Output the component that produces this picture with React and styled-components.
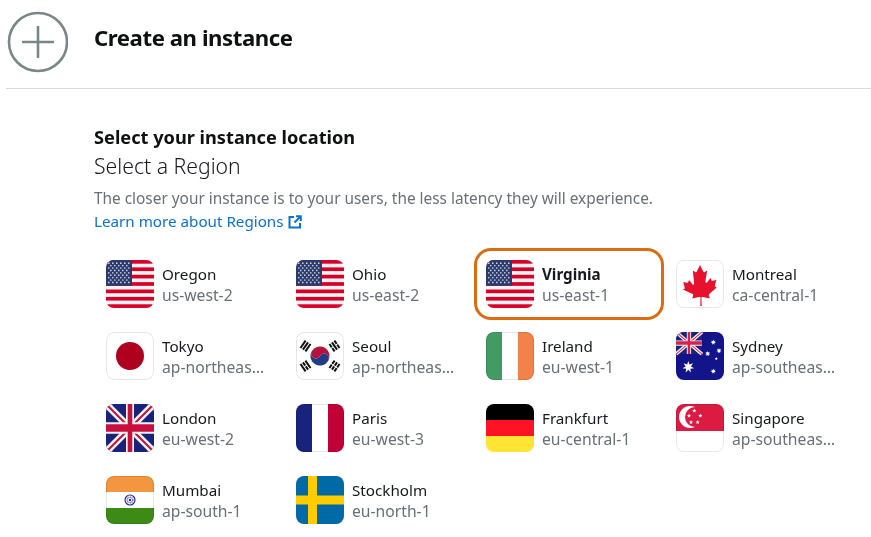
import React from "react";
import styled, { createGlobalStyle } from "styled-components";

const Global = createGlobalStyle`
  html, body { margin: 0; padding: 0; background: #fff; }
  body { font-family: "Noto Sans", "Open Sans", Arial, sans-serif; color: #16191f; }
`;

const Page = styled.div`
  width: 871px;
  height: 537px;
  overflow: hidden;
  box-sizing: border-box;
  padding-left: 6px;
`;

const Header = styled.header`
  height: 89px;
  box-sizing: border-box;
  border-bottom: 1px solid #d5dbdb;
  display: flex;
  align-items: flex-start;
  gap: 26px;
  padding: 11px 0 0 0;
`;

const Title = styled.h1`
  margin: 10px 0 0;
  font-size: 22.2px;
  line-height: 33px;
  font-weight: 700;
  color: #0f1111;
  letter-spacing: -0.45px;
`;

const Section = styled.section`
  padding: 35px 0 0 88px;
`;

const Heading = styled.h2`
  margin: 0;
  font-size: 18.2px;
  line-height: 26px;
  font-weight: 700;
  color: #0f1111;
`;

const SubHeading = styled.h3`
  margin: 2px 0 0;
  font-size: 21.2px;
  line-height: 28px;
  font-weight: 300;
  color: #16191f;
`;

const Description = styled.p`
  margin: 7px 0 0;
  font-size: 15.38px;
  line-height: 23px;
  color: #687078;
`;

const LearnLink = styled.a`
  display: inline-flex;
  align-items: center;
  gap: 4px;
  font-size: 15.2px;
  line-height: 23px;
  color: #0972d3;
  text-decoration: none;
`;

const Grid = styled.div`
  display: grid;
  grid-template-columns: repeat(4, 190px);
  grid-auto-rows: 72px;
  margin-top: 15px;
`;

const Card = styled.div`
  box-sizing: border-box;
  height: 72px;
  display: flex;
  align-items: center;
  gap: 8px;
  padding: 0 15px 0 9px;
  border-radius: 17px;
  border: 3px solid ${(p) => (p.$selected ? "#dd6b10" : "transparent")};
`;

const FlagBox = styled.div`
  flex: none;
  width: 48px;
  height: 48px;
  border-radius: 8px;
  overflow: hidden;
  position: relative;
  svg { display: block; width: 48px; height: 48px; }
  &::after {
    content: "";
    position: absolute;
    inset: 0;
    border-radius: 8px;
    mix-blend-mode: multiply;
    box-shadow: inset 0 0 0 1px ${(p) => (p.$outlined ? "#e4e6e8" : "transparent")};
  }
`;

const Texts = styled.div`
  min-width: 0;
  flex: 1;
  padding-top: 2px;
`;

const City = styled.div`
  font-size: 15.2px;
  line-height: 21px;
  font-weight: ${(p) => (p.$selected ? 700 : 400)};
  color: #16191f;
`;

const Code = styled.div`
  font-size: 15.7px;
  line-height: 21px;
  color: #687078;
  white-space: nowrap;
  overflow: hidden;
  text-overflow: ellipsis;
`;

const USFlag = () => {
  const stripes = [];
  for (let i = 0; i < 13; i += 2) {
    stripes.push(<rect key={i} x="0" y={i * 3.69} width="48" height="3.69" fill="#d80027" />);
  }
  const stars = [];
  for (let r = 0; r < 9; r++) {
    const n = r % 2 === 0 ? 6 : 5;
    for (let c = 0; c < n; c++) {
      stars.push(
        <circle key={`${r}-${c}`} cx={(r % 2 === 0 ? 2.8 : 4.8) + c * 4} cy={3.2 + r * 2.4} r="0.85" fill="#c9cfe0" />
      );
    }
  }
  return (
    <svg viewBox="0 0 48 48">
      <rect width="48" height="48" fill="#f2f2f4" />
      {stripes}
      <rect width="26" height="25.8" fill="#2b3a6e" />
      {stars}
    </svg>
  );
};

const JapanFlag = () => (
  <svg viewBox="0 0 48 48">
    <circle cx="24" cy="24" r="14" fill="#b0001f" />
  </svg>
);

const Bars = ({ x, y, rot, broken }) => (
  <g transform={`translate(${x} ${y}) rotate(${rot})`} fill="#111">
    {[-3, 0, 3].map((d, i) =>
      broken[i] ? (
        <g key={d}>
          <rect x="-4.5" y={d - 1} width="4" height="2" />
          <rect x="0.5" y={d - 1} width="4" height="2" />
        </g>
      ) : (
        <rect key={d} x="-4.5" y={d - 1} width="9" height="2" />
      )
    )}
  </g>
);

const KoreaFlag = () => (
  <svg viewBox="0 0 48 48">
    <g transform="rotate(30 24 24)">
      <path d="M14.4 24a9.6 9.6 0 0 1 19.2 0 4.8 4.8 0 0 0-9.6 0 4.8 4.8 0 0 1-9.6 0z" fill="#b5123e" />
      <path d="M33.6 24a9.6 9.6 0 0 1-19.2 0 4.8 4.8 0 0 0 9.6 0 4.8 4.8 0 0 1 9.6 0z" fill="#233b84" />
    </g>
    <Bars x={9.5} y={14} rot={-55} broken={[0, 0, 0]} />
    <Bars x={38.5} y={14} rot={55} broken={[1, 0, 1]} />
    <Bars x={9.5} y={34} rot={55} broken={[0, 1, 0]} />
    <Bars x={38.5} y={34} rot={-55} broken={[1, 1, 1]} />
  </svg>
);

const Vertical = ({ colors }) => (
  <svg viewBox="0 0 48 48">
    <rect x="0" width="16" height="48" fill={colors[0]} />
    <rect x="16" width="16" height="48" fill={colors[1]} />
    <rect x="32" width="16" height="48" fill={colors[2]} />
  </svg>
);

const CanadaFlag = () => (
  <svg viewBox="0 0 48 48">
    <path
      transform="translate(2.4 0) scale(0.9 1)"
      fill="#e8112d"
      d="M24 5l3.6 6.6c.4.7 1.1.6 1.8.3l2.6-1.3-1.9 10.2c-.4 1.9.9 2.4 1.8 1.4l3.8-4.2 1 2.2c.3.6.8.6 1.4.5l4-.8-1.4 5c-.3 1.1-.5 1.6.4 1.9l1.4.7-8.2 6.6c-.8.7-.6 1-.3 1.9l.8 2.4-7.6-1.4c-.9-.2-1.6-.2-1.6.5l.3 8.5h-1.6l.3-8.5c0-.7-.7-.7-1.6-.5l-7.6 1.4.8-2.4c.3-.9.5-1.2-.3-1.9L5 29.5l1.4-.7c.9-.3.7-.8.4-1.9l-1.4-5 4 .8c.6.1 1.1.1 1.4-.5l1-2.2 3.8 4.2c.9 1 2.2.5 1.8-1.4L16 10.6l2.6 1.3c.7.3 1.4.4 1.8-.3z"
    />
  </svg>
);

const UnionPattern = ({ red }) => (
  <>
    <rect width="48" height="48" fill="#1a237b" />
    <path d="M0 0L48 48M48 0L0 48" stroke="#f4f4f6" strokeWidth="7" />
    <path d="M-1 -1L22 22M26 22L49 -1M49 49L26 26M22 26L-1 49" stroke={red} strokeWidth="2" />
    <path d="M24 0V48" stroke="#f4f4f6" strokeWidth="8" />
    <path d="M0 24H48" stroke="#f4f4f6" strokeWidth="11.5" />
    <path d="M24 0V48" stroke={red} strokeWidth="4.6" />
    <path d="M0 24H48" stroke={red} strokeWidth="7.6" />
  </>
);

const UnionJack = () => (
  <svg viewBox="0 0 48 48">
    <UnionPattern red="#c8103e" />
  </svg>
);

const StarShape = ({ cx, cy, r, fill = "#fff", n = 7 }) => {
  const pts = [];
  for (let i = 0; i < n * 2; i++) {
    const rad = i % 2 === 0 ? r : r * 0.45;
    const a = (Math.PI * i) / n - Math.PI / 2;
    pts.push(`${(cx + rad * Math.cos(a)).toFixed(2)},${(cy + rad * Math.sin(a)).toFixed(2)}`);
  }
  return <polygon points={pts.join(" ")} fill={fill} />;
};

const AustraliaFlag = () => (
  <svg viewBox="0 0 48 48">
    <rect width="48" height="48" fill="#14148a" />
    <g transform="scale(0.54 0.46)">
      <UnionPattern red="#d8204a" />
    </g>
    <StarShape cx={12.3} cy={35} r={6} />
    <StarShape cx={37.3} cy={10.3} r={2.8} />
    <StarShape cx={43} cy={18.7} r={2.8} />
    <StarShape cx={31.7} cy={21.7} r={2.8} />
    <StarShape cx={40.3} cy={26.7} r={1.6} n={5} />
    <StarShape cx={37.3} cy={39.3} r={2.8} />
  </svg>
);

const GermanyFlag = () => (
  <svg viewBox="0 0 48 48">
    <rect width="48" height="16" fill="#000" />
    <rect y="16" width="48" height="16" fill="#ff1224" />
    <rect y="32" width="48" height="16" fill="#ffe533" />
  </svg>
);

const SingaporeFlag = () => (
  <svg viewBox="0 0 48 48">
    <rect width="48" height="27" fill="#dc1a42" />
    <circle cx="14" cy="13" r="11" fill="#fff" />
    <circle cx="19" cy="13" r="10" fill="#dc1a42" />
    <StarShape cx={18.3} cy={6.7} r={2.2} n={5} />
    <StarShape cx={24.3} cy={11.7} r={2.2} n={5} />
    <StarShape cx={21.7} cy={18.3} r={2.2} n={5} />
    <StarShape cx={15} cy={18.3} r={2.2} n={5} />
    <StarShape cx={13} cy={11.7} r={2.2} n={5} />
  </svg>
);

const IndiaFlag = () => (
  <svg viewBox="0 0 48 48">
    <rect width="48" height="48" fill="#ffffff" />
    <rect width="48" height="16" fill="#f4953f" />
    <rect y="32" width="48" height="16" fill="#3e8a17" />
    <circle cx="24" cy="24" r="5" fill="none" stroke="#2b2b8c" strokeWidth="1.2" />
    <circle cx="24" cy="24" r="2.8" fill="none" stroke="#6a6ab8" strokeWidth="1.6" strokeDasharray="1 .6" />
    <circle cx="24" cy="24" r="1.2" fill="#2b2b8c" />
  </svg>
);

const SwedenFlag = () => (
  <svg viewBox="0 0 48 48">
    <rect width="48" height="48" fill="#006aa7" />
    <rect x="12" width="9" height="48" fill="#fecc00" />
    <rect y="19.5" width="48" height="9" fill="#fecc00" />
  </svg>
);

const IrelandFlag = () => <Vertical colors={["#429b62", "#ffffff", "#f2824a"]} />;
const FranceFlag = () => <Vertical colors={["#1a237b", "#ffffff", "#c20038"]} />;

const regions = [
  { city: "Oregon", code: "us-west-2", Flag: USFlag },
  { city: "Ohio", code: "us-east-2", Flag: USFlag },
  { city: "Virginia", code: "us-east-1", Flag: USFlag, selected: true },
  { city: "Montreal", code: "ca-central-1", Flag: CanadaFlag, outlined: true },
  { city: "Tokyo", code: "ap-northeast-1", Flag: JapanFlag, outlined: true },
  { city: "Seoul", code: "ap-northeast-2", Flag: KoreaFlag, outlined: true },
  { city: "Ireland", code: "eu-west-1", Flag: IrelandFlag, outlined: true },
  { city: "Sydney", code: "ap-southeast-2", Flag: AustraliaFlag },
  { city: "London", code: "eu-west-2", Flag: UnionJack },
  { city: "Paris", code: "eu-west-3", Flag: FranceFlag, outlined: true },
  { city: "Frankfurt", code: "eu-central-1", Flag: GermanyFlag },
  { city: "Singapore", code: "ap-southeast-1", Flag: SingaporeFlag, outlined: true },
  { city: "Mumbai", code: "ap-south-1", Flag: IndiaFlag, outlined: true },
  { city: "Stockholm", code: "eu-north-1", Flag: SwedenFlag },
];

const PlusIcon = () => (
  <svg width="62" height="62" viewBox="0 0 62 62" fill="none" stroke="#7a8787" strokeWidth="2.6" style={{ flex: "none" }}>
    <circle cx="32" cy="31" r="29" />
    <path d="M32 15V47M16 31H48" />
  </svg>
);

const ExternalIcon = () => (
  <svg width="14" height="14" viewBox="0 0 14 14" fill="none" stroke="#0972d3" strokeWidth="2">
    <path d="M6 2H1.5v10.5H12V8" />
    <path d="M8 1.2h4.8V6M12.6 1.4L6.5 7.5" />
  </svg>
);

export default function App() {
  return (
    <Page>
      <Global />
      <Header>
        <PlusIcon />
        <Title>Create an instance</Title>
      </Header>
      <Section>
        <Heading>Select your instance location</Heading>
        <SubHeading>Select a Region</SubHeading>
        <Description>The closer your instance is to your users, the less latency they will experience.</Description>
        <LearnLink href="#">
          Learn more about Regions <ExternalIcon />
        </LearnLink>
        <Grid>
          {regions.map(({ city, code, Flag, selected, outlined }) => (
            <Card key={city} $selected={selected}>
              <FlagBox $outlined={outlined}>
                <Flag />
              </FlagBox>
              <Texts>
                <City $selected={selected}>{city}</City>
                <Code>{code}</Code>
              </Texts>
            </Card>
          ))}
        </Grid>
      </Section>
    </Page>
  );
}
